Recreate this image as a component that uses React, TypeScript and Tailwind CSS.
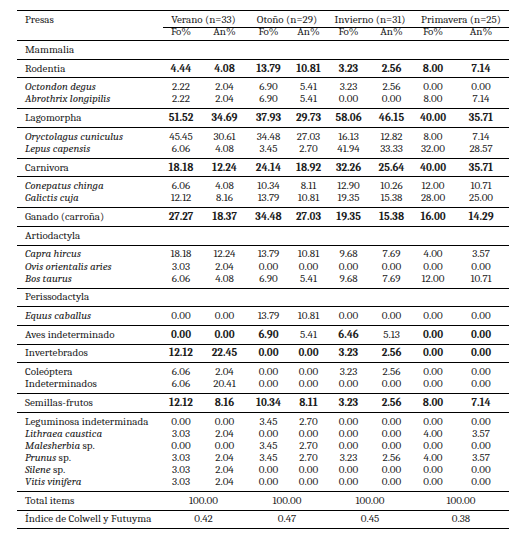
import React from "react";

const COLS =
  "grid grid-cols-[143px_42px_45px_43px_37px_43px_43px_40px_56px]";

type Row = {
  label: React.ReactNode;
  vals?: string[];
  bold?: boolean | boolean[];
};

const I = ({ children }: { children: React.ReactNode }) => (
  <span className="italic">{children}</span>
);

const blocks: Row[][] = [
  [{ label: "Mammalia" }],
  [
    {
      label: "Rodentia",
      vals: ["4.44", "4.08", "13.79", "10.81", "3.23", "2.56", "8.00", "7.14"],
      bold: true,
    },
  ],
  [
    {
      label: <I>Octondon degus</I>,
      vals: ["2.22", "2.04", "6.90", "5.41", "3.23", "2.56", "0.00", "0.00"],
    },
    {
      label: <I>Abrothrix longipilis</I>,
      vals: ["2.22", "2.04", "6.90", "5.41", "0.00", "0.00", "8.00", "7.14"],
    },
  ],
  [
    {
      label: "Lagomorpha",
      vals: ["51.52", "34.69", "37.93", "29.73", "58.06", "46.15", "40.00", "35.71"],
      bold: true,
    },
  ],
  [
    {
      label: <I>Oryctolagus cuniculus</I>,
      vals: ["45.45", "30.61", "34.48", "27.03", "16.13", "12.82", "8.00", "7.14"],
    },
    {
      label: <I>Lepus capensis</I>,
      vals: ["6.06", "4.08", "3.45", "2.70", "41.94", "33.33", "32.00", "28.57"],
    },
  ],
  [
    {
      label: "Carnivora",
      vals: ["18.18", "12.24", "24.14", "18.92", "32.26", "25.64", "40.00", "35.71"],
      bold: true,
    },
  ],
  [
    {
      label: <I>Conepatus chinga</I>,
      vals: ["6.06", "4.08", "10.34", "8.11", "12.90", "10.26", "12.00", "10.71"],
    },
    {
      label: <I>Galictis cuja</I>,
      vals: ["12.12", "8.16", "13.79", "10.81", "19.35", "15.38", "28.00", "25.00"],
    },
  ],
  [
    {
      label: "Ganado (carroña)",
      vals: ["27.27", "18.37", "34.48", "27.03", "19.35", "15.38", "16.00", "14.29"],
      bold: true,
    },
  ],
  [{ label: "Artiodactyla" }],
  [
    {
      label: <I>Capra hircus</I>,
      vals: ["18.18", "12.24", "13.79", "10.81", "9.68", "7.69", "4.00", "3.57"],
    },
    {
      label: <I>Ovis orientalis aries</I>,
      vals: ["3.03", "2.04", "0.00", "0.00", "0.00", "0.00", "0.00", "0.00"],
    },
    {
      label: <I>Bos taurus</I>,
      vals: ["6.06", "4.08", "6.90", "5.41", "9.68", "7.69", "12.00", "10.71"],
    },
  ],
  [{ label: "Perissodactyla" }],
  [
    {
      label: <I>Equus caballus</I>,
      vals: ["0.00", "0.00", "13.79", "10.81", "0.00", "0.00", "0.00", "0.00"],
    },
  ],
  [
    {
      label: "Aves indeterminado",
      vals: ["0.00", "0.00", "6.90", "5.41", "6.46", "5.13", "0.00", "0.00"],
      bold: [true, true, true, false, true, false, true, true],
    },
  ],
  [
    {
      label: "Invertebrados",
      vals: ["12.12", "22.45", "0.00", "0.00", "3.23", "2.56", "0.00", "0.00"],
      bold: true,
    },
  ],
  [
    {
      label: "Coleóptera",
      vals: ["6.06", "2.04", "0.00", "0.00", "3.23", "2.56", "0.00", "0.00"],
    },
    {
      label: "Indeterminados",
      vals: ["6.06", "20.41", "0.00", "0.00", "0.00", "0.00", "0.00", "0.00"],
    },
  ],
  [
    {
      label: "Semillas-frutos",
      vals: ["12.12", "8.16", "10.34", "8.11", "3.23", "2.56", "8.00", "7.14"],
      bold: true,
    },
  ],
  [
    {
      label: "Leguminosa indeterminada",
      vals: ["0.00", "0.00", "3.45", "2.70", "0.00", "0.00", "0.00", "0.00"],
    },
    {
      label: <I>Lithraea caustica</I>,
      vals: ["3.03", "2.04", "0.00", "0.00", "0.00", "0.00", "4.00", "3.57"],
    },
    {
      label: (
        <>
          <I>Malesherbia</I> sp.
        </>
      ),
      vals: ["0.00", "0.00", "3.45", "2.70", "0.00", "0.00", "0.00", "0.00"],
    },
    {
      label: (
        <>
          <I>Prunus</I> sp.
        </>
      ),
      vals: ["3.03", "2.04", "3.45", "2.70", "3.23", "2.56", "4.00", "3.57"],
    },
    {
      label: (
        <>
          <I>Silene</I> sp.
        </>
      ),
      vals: ["3.03", "2.04", "0.00", "0.00", "0.00", "0.00", "0.00", "0.00"],
    },
    {
      label: <I>Vitis vinifera</I>,
      vals: ["3.03", "2.04", "0.00", "0.00", "0.00", "0.00", "0.00", "0.00"],
    },
  ],
];

function DataRow({ row }: { row: Row }) {
  const vals = row.vals ?? [];
  return (
    <div className={COLS + " leading-[12.07px]"}>
      <div className="pl-[8px] whitespace-nowrap">{row.label}</div>
      {vals.map((v, i) => {
        const b = Array.isArray(row.bold) ? row.bold[i] : !!row.bold;
        return (
          <div key={i} className={"text-center " + (b ? "font-bold" : "")}>
            {v}
          </div>
        );
      })}
    </div>
  );
}

function MergedRow({ label, vals }: { label: string; vals: string[] }) {
  return (
    <div className="border-b border-black py-[2.83px]">
      <div className={COLS + " leading-[12.07px]"}>
        <div className="pl-[8px] whitespace-nowrap">{label}</div>
        {vals.map((v, i) => (
          <div key={i} className="col-span-2 text-center">
            {v}
          </div>
        ))}
      </div>
    </div>
  );
}

export default function App() {
  return (
    <div className="w-[527px] h-[544px] bg-white text-[#1c1c1c] font-serif [font-family:Liberation_Serif,serif] text-[11px]">
      <div className="pt-[10px] pl-[17px]">
        <div className="w-[492px] border-t border-black">
          {/* Header */}
          <div className="border-b border-black pb-[4px]">
            <div className={COLS + " leading-[12px] pt-[3px]"}>
              <div className="pl-[8px]">Presas</div>
              <div className="col-span-2 text-center">Verano (n=33)</div>
              <div className="col-span-2 text-center">Otoño (n=29)</div>
              <div className="col-span-2 text-center">Invierno (n=31)</div>
              <div className="col-span-2 text-center">Primavera (n=25)</div>
            </div>
            <div className={COLS + " mt-[1px]"}>
              <div />
              <div className="col-span-8 ml-[3px] h-px bg-black" />
            </div>
            <div className={COLS + " leading-[8px]"}>
              <div />
              <div className="text-center">Fo%</div>
              <div className="text-center">An%</div>
              <div className="text-center">Fo%</div>
              <div className="text-center">An%</div>
              <div className="text-center">Fo%</div>
              <div className="text-center">An%</div>
              <div className="text-center">Fo%</div>
              <div className="text-center">An%</div>
            </div>
          </div>
          {blocks.map((rows, bi) => (
            <div key={bi} className="border-b border-black py-[2.83px]">
              {rows.map((r, ri) => (
                <DataRow key={ri} row={r} />
              ))}
            </div>
          ))}
          <MergedRow
            label="Total items"
            vals={["100.00", "100.00", "100.00", "100.00"]}
          />
          <MergedRow
            label="Índice de Colwell y Futuyma"
            vals={["0.42", "0.47", "0.45", "0.38"]}
          />
        </div>
      </div>
    </div>
  );
}
